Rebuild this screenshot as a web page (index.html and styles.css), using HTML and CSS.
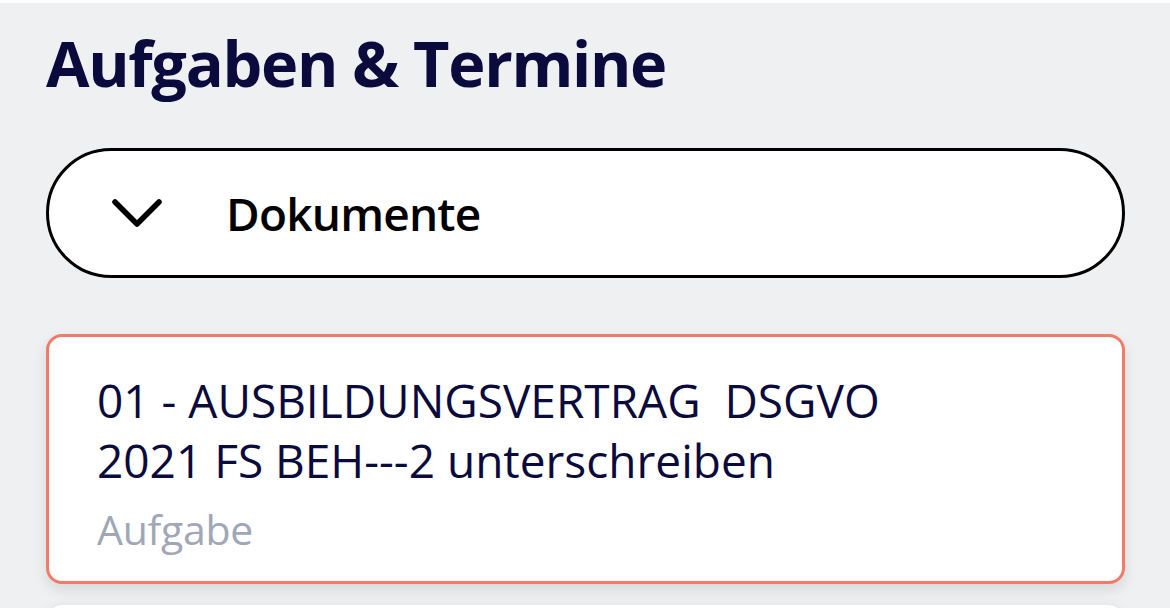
FILE: index.html
```html
<!DOCTYPE html>
<html lang="de">
<head>
<meta charset="utf-8">
<title>Aufgaben &amp; Termine</title>
<link rel="stylesheet" href="styles.css">
</head>
<body>
<div class="topstrip"></div>
<main class="page">
  <h1 class="title">Aufgaben &amp; Termine</h1>
  <button class="filter" type="button">
    <svg class="chev" width="50" height="30" viewBox="0 0 50 30" aria-hidden="true">
      <polyline points="3,4 25,26 47,4" fill="none" stroke="#000" stroke-width="5.5" stroke-linecap="round" stroke-linejoin="round"/>
    </svg>
    <span class="filter-label">Dokumente</span>
  </button>
  <section class="list">
    <article class="card card--active">
      <p class="card-title">01 - AUSBILDUNGSVERTRAG&nbsp; DSGVO<br>2021 FS BEH---2 unterschreiben</p>
      <p class="card-type">Aufgabe</p>
    </article>
    <article class="card"></article>
  </section>
</main>
</body>
</html>
```
FILE: styles.css
```css
* { box-sizing: border-box; }
html, body { margin: 0; padding: 0; }
body {
  background: #eff0f2;
  font-family: "Open Sans", "Noto Sans", sans-serif;
  width: 1170px;
  height: 608px;
  overflow: hidden;
}
.topstrip { height: 3px; background: #ffffff; }
.page {
  padding: 20px 45px 0 46px;
  display: flex;
  flex-direction: column;
}
.title {
  margin: 0;
  font-size: 63px;
  line-height: 80px;
  font-weight: 700;
  letter-spacing: -1.3px;
  color: #0a0a3c;
}
.filter {
  margin-top: 45px;
  height: 130px;
  border: 3px solid #000;
  border-radius: 65px;
  background: #fff;
  display: flex;
  align-items: center;
  padding: 0 0 0 63px;
  font-family: inherit;
  text-align: left;
}
.chev { display: block; flex: none; margin-right: 64px; }
.filter-label {
  font-size: 46px;
  font-weight: 600;
  letter-spacing: -0.8px;
  color: #000;
}
.list {
  margin-top: 56px;
  display: flex;
  flex-direction: column;
  gap: 19px;
}
.card {
  background: #fff;
  border-radius: 16px;
  border: 2px solid #e9eaee;
  box-shadow: 0 6px 14px rgba(0, 0, 0, 0.10);
  height: 250px;
  flex: none;
}
.card--active {
  border: 3px solid #f27a66;
  padding: 33px 48px 22px 48px;
}
.card-title {
  margin: 0;
  font-size: 46px;
  line-height: 60px;
  color: #0a0a3c;
}
.card-type {
  margin: 9px 0 0;
  font-size: 41px;
  line-height: 60px;
  letter-spacing: -0.3px;
  color: #a0a7b7;
}
```
